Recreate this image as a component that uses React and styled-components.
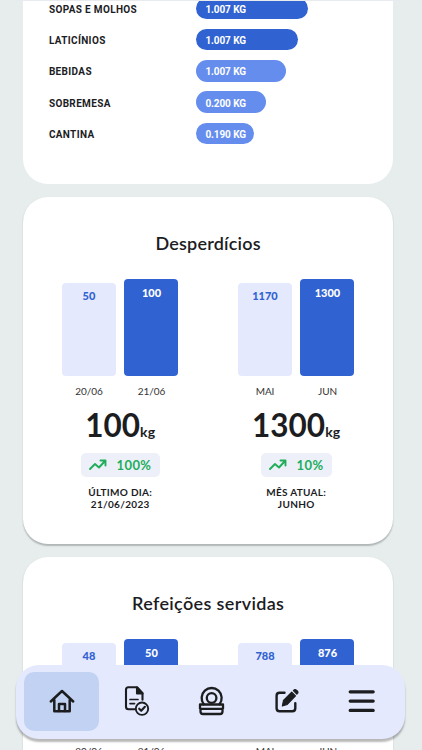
import React from "react";
import styled, { createGlobalStyle } from "styled-components";

const GlobalStyle = createGlobalStyle`
  * {
    box-sizing: border-box;
  }

  body {
    margin: 0;
    background-color: #e7eded;
    overflow: hidden;
  }
`;

const Page = styled.main`
  width: 422px;
  height: 750px;
  padding-left: 23.4px;
  border-top: 1px solid #e8ebed;
  display: flex;
  flex-direction: column;
  gap: 13px;
  overflow: hidden;
  background-color: #e7eded;
  color: #1c1d1f;
  font-family: Lato, "Open Sans", sans-serif;
`;

const Card = styled.section`
  flex: none;
  width: 369.5px;
  height: ${(props) => props.height}px;
  border-radius: 25px;
  background-color: #fff;
  box-shadow: ${(props) => (props.flat ? "none" : "0 1.5px 1.5px rgba(0, 0, 0, 0.24)")};
`;

const WasteCard = styled(Card)`
  border-radius: 0 0 25px 25px;
  padding-left: 25.5px;
  overflow: hidden;
`;

const WasteList = styled.div`
  margin-top: -3.5px;
  display: flex;
  flex-direction: column;
  gap: 9.8px;
`;

const WasteRow = styled.div`
  height: 21.5px;
  display: grid;
  grid-template-columns: 147px 1fr;
  align-items: center;
  font-family: Roboto, sans-serif;
  font-weight: 700;
  font-size: 10px;
  line-height: 12px;
`;

const WasteName = styled.span`
  padding-top: 3px;
  letter-spacing: 0.35px;
`;

const Pill = styled.span`
  height: 21.5px;
  padding: 3px 0 0 9.5px;
  display: flex;
  align-items: center;
  border-radius: 11px;
  background-color: ${(props) => (props.strong ? "#3062d1" : "#648ded")};
  color: #fff;
  letter-spacing: -0.1px;
`;

const Title = styled.h2`
  margin: 0;
  padding-top: 34px;
  text-align: center;
  font-size: 18px;
  font-weight: 600;
  line-height: 24px;
  letter-spacing: ${(props) => props.spacing}px;
`;

const Stats = styled.div`
  padding: 23.5px 0 0 38.6px;
  display: flex;
  gap: 59.5px;
`;

const Stat = styled.div`
  width: 116.5px;
  display: flex;
  flex-direction: column;
  align-items: center;
`;

const Bars = styled.div`
  width: 100%;
  display: flex;
  justify-content: space-between;
  align-items: flex-end;
`;

const BarColumn = styled.div`
  width: 54px;
  display: flex;
  flex-direction: column;
  align-items: center;
`;

const Bar = styled.div`
  width: 100%;
  height: ${(props) => (props.current ? 97.5 : 93)}px;
  padding-top: ${(props) => (props.current ? 7 : 6)}px;
  border-radius: 4px;
  background-color: ${(props) => (props.current ? "#3062d1" : "#e4e9fe")};
  color: ${(props) => (props.current ? "#fff" : "#3062d1")};
  text-align: center;
  font-size: 11px;
  font-weight: 900;
  line-height: 14px;
`;

const BarLabel = styled.span`
  margin-top: 7.5px;
  font-size: 10px;
  line-height: 14px;
  letter-spacing: -0.1px;
  color: #333;
`;

const Total = styled.div`
  margin-top: 7px;
  display: flex;
  align-items: baseline;
  font-size: 31.5px;
  font-weight: 700;
  line-height: 40px;
`;

const Unit = styled.span`
  font-size: 14px;
  font-weight: 700;
  line-height: 20px;
  letter-spacing: 0.2px;
`;

const Badge = styled.div`
  height: 24.5px;
  margin-top: 8px;
  padding: 0 8.5px 0 8px;
  display: flex;
  align-items: center;
  gap: 10px;
  border-radius: 5px;
  background-color: #edf0f9;
  color: #20ad5a;
  font-size: 13px;
  font-weight: 700;
  line-height: 16px;
  letter-spacing: 0.4px;
`;

const Period = styled.div`
  margin-top: 9px;
  text-align: center;
  font-size: 10px;
  font-weight: 700;
  line-height: 12px;
  letter-spacing: 0.3px;
`;

const Navbar = styled.nav`
  position: fixed;
  left: 15.5px;
  top: 665px;
  width: 389.5px;
  height: 73.5px;
  padding: 6.5px 5px 7.5px 8.5px;
  display: flex;
  border-radius: 23px;
  background-color: #e4e9fe;
  box-shadow: 0 3px 2px rgba(0, 0, 0, 0.28);
`;

const NavItem = styled.button`
  flex: none;
  width: 75px;
  height: 59.5px;
  padding: 0;
  border: 0;
  border-radius: 10px;
  display: flex;
  align-items: center;
  justify-content: center;
  background-color: ${(props) => (props.active ? "#c2d2f2" : "transparent")};
  color: #1c1d1f;
`;

const Icon = styled.svg`
  display: block;
  fill: none;
  stroke: currentColor;
  stroke-linecap: round;
  stroke-linejoin: round;
`;

const TrendIcon = () => (
  <Icon width="18" height="12" viewBox="0 0 18 12" strokeWidth="1.9">
    <path d="M1 10 6 5l4 3.5L16 2M11.5 1.5h5v5" />
  </Icon>
);

const HomeIcon = () => (
  <Icon width="30" height="30" viewBox="0 0 30 30" strokeWidth="2.5">
    <path d="M3.8 15.5 15 5 26.2 15.5M7.3 14v11.2h15.4V14" />
    <path d="M12 25v-7h6v7" />
  </Icon>
);

const ReportIcon = () => (
  <Icon width="30" height="30" viewBox="0 0 30 30" strokeWidth="2.1">
    <path d="M12.5 23.2H6.5Q4 23.2 4 20.7V3.7Q4 1.2 6.5 1.2H15l5.5 6v6.5" />
    <path d="M15 1.5v6h5.5Z" fill="currentColor" />
    <path d="M8 13.5h8M8 17.6h4.5" strokeWidth="1.7" />
    <circle cx="20" cy="22.7" r="6.2" strokeWidth="1.9" />
    <path d="m17.2 22.7 2 2.1 3.7-4" />
  </Icon>
);

const PlatesIcon = () => (
  <Icon width="30" height="30" viewBox="0 0 30 30" strokeWidth="2.3">
    <path d="M6.8 18.2A10 10 0 1 1 22.5 18.2" />
    <circle cx="14.6" cy="12" r="4.8" />
    <path d="M3 18.5h23v4.3H3ZM3.5 23v2.5q0 2.5 2.5 2.5h17q2.5 0 2.5-2.5V23" />
  </Icon>
);

const EditIcon = () => (
  <Icon width="30" height="30" viewBox="0 0 30 30" strokeWidth="2.4">
    <path d="M12.5 6.8H7.6Q4.6 6.8 4.6 9.8V22.3Q4.6 25.3 7.6 25.3h12.7q3 0 3-3v-5" />
    <path d="m10.3 20 1.2-5.7 8.2-8.2 3.8 3.8-8.2 8.5Z" fill="currentColor" strokeWidth="1.1" />
    <path d="m21.4 4.6 1-.8q1-.5 2 .4l1.2 1.1q.8 1 0 2L24.8 8.1Z" fill="currentColor" strokeWidth="1.2" />
  </Icon>
);

const MenuIcon = () => (
  <Icon width="30" height="30" viewBox="0 0 30 30" strokeWidth="3.2">
    <path d="M3.2 5.8h23M3.2 15.1h23M3.2 24.4h23" />
  </Icon>
);

const waste = [
  { name: "SOPAS E MOLHOS", value: "1.007 KG", width: 112, strong: true },
  { name: "LATICÍNIOS", value: "1.007 KG", width: 102, strong: true },
  { name: "BEBIDAS", value: "1.007 KG", width: 90.5 },
  { name: "SOBREMESA", value: "0.200 KG", width: 70 },
  { name: "CANTINA", value: "0.190 KG", width: 58 },
];

const wasted = [
  {
    labels: ["20/06", "21/06"],
    values: [50, 100],
    total: 100,
    unit: "kg",
    change: "100%",
    period: ["ÚLTIMO DIA:", "21/06/2023"],
  },
  {
    labels: ["MAI", "JUN"],
    values: [1170, 1300],
    total: 1300,
    unit: "kg",
    change: "10%",
    period: ["MÊS ATUAL:", "JUNHO"],
  },
];

const served = [
  { labels: ["20/06", "21/06"], values: [48, 50] },
  { labels: ["MAI", "JUN"], values: [788, 876] },
];

const navItems = [
  { name: "Início", icon: HomeIcon },
  { name: "Relatórios", icon: ReportIcon },
  { name: "Refeições", icon: PlatesIcon },
  { name: "Editar", icon: EditIcon },
  { name: "Menu", icon: MenuIcon },
];

const StatsCard = ({ title, stats, spacing }) => (
  <Card height={347}>
    <Title spacing={spacing}>{title}</Title>
    <Stats>
      {stats.map((stat) => (
        <Stat key={stat.labels[0]}>
          <Bars>
            {stat.labels.map((label, idx) => (
              <BarColumn key={label}>
                <Bar current={idx === 1 ? 1 : undefined}>{stat.values[idx]}</Bar>
                <BarLabel>{label}</BarLabel>
              </BarColumn>
            ))}
          </Bars>
          {stat.total && (
            <>
              <Total>
                {stat.total}
                <Unit>{stat.unit}</Unit>
              </Total>
              <Badge>
                <TrendIcon />
                {stat.change}
              </Badge>
              <Period>
                {stat.period[0]}
                <br />
                {stat.period[1]}
              </Period>
            </>
          )}
        </Stat>
      ))}
    </Stats>
  </Card>
);

export default () => {
  return (
    <>
      <GlobalStyle />
      <Page>
        <WasteCard height={183} flat="true">
          <WasteList>
            {waste.map((item) => (
              <WasteRow key={item.name}>
                <WasteName>{item.name}</WasteName>
                <Pill strong={item.strong ? 1 : undefined} style={{ width: item.width }}>
                  {item.value}
                </Pill>
              </WasteRow>
            ))}
          </WasteList>
        </WasteCard>
        <StatsCard title="Desperdícios" stats={wasted} spacing={0.2} />
        <StatsCard title="Refeições servidas" stats={served} spacing={0.35} />
      </Page>

      <Navbar>
        {navItems.map(({ name, icon: NavIcon }, idx) => (
          <NavItem key={name} active={idx === 0 ? 1 : undefined} aria-label={name}>
            <NavIcon />
          </NavItem>
        ))}
      </Navbar>
    </>
  );
};
